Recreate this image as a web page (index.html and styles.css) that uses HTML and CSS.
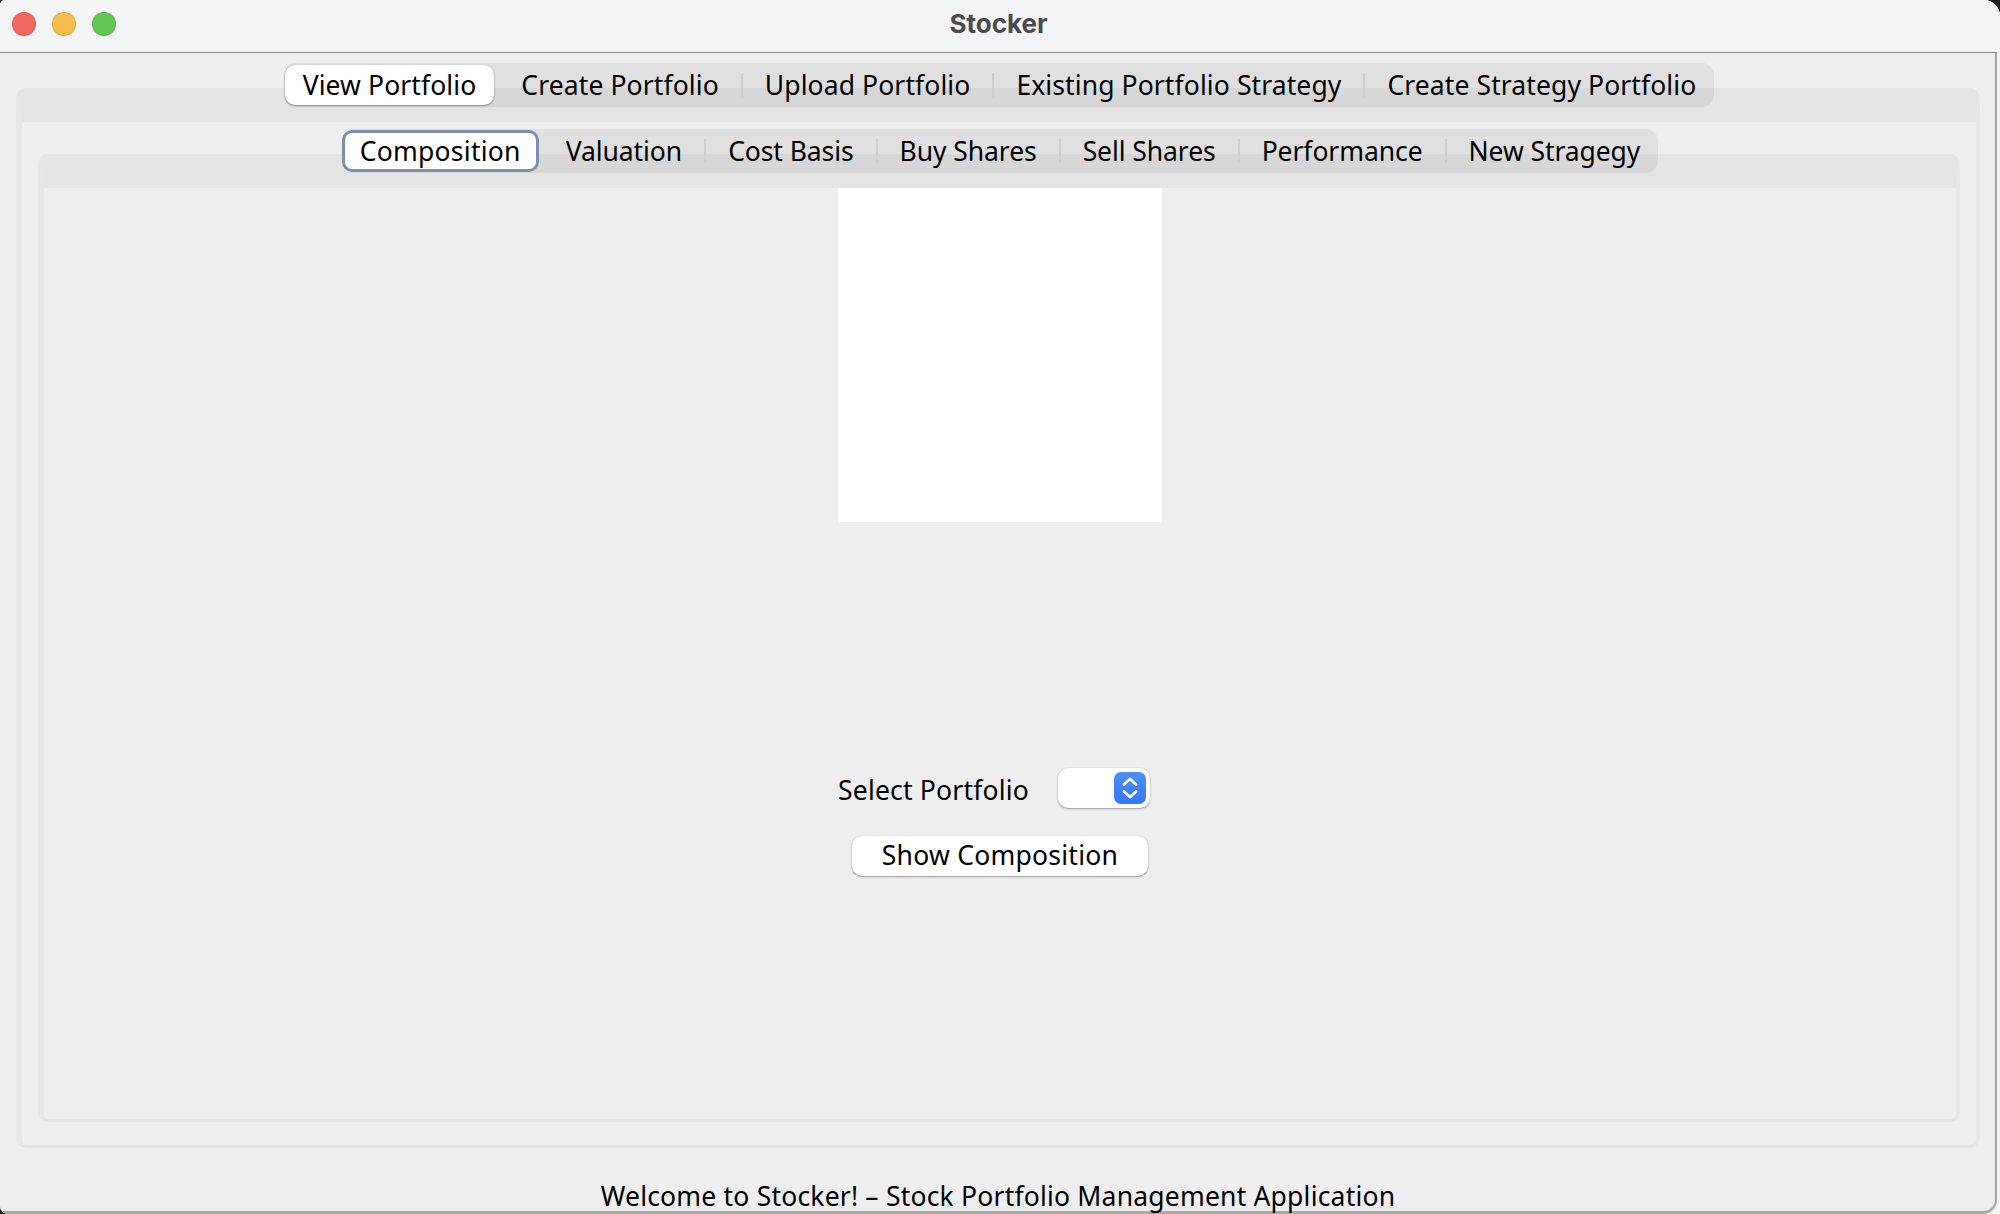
FILE: index.html
```html
<!DOCTYPE html>
<html lang="en">
<head>
<meta charset="utf-8">
<title>Stocker</title>
<link rel="stylesheet" href="styles.css">
</head>
<body>
<div class="window">
  <header class="titlebar">
    <div class="lights">
      <span class="light red"></span>
      <span class="light yellow"></span>
      <span class="light green"></span>
    </div>
    <div class="title">Stocker</div>
  </header>
  <main class="content">
    <section class="tabpane outer">
      <nav class="tabbar">
        <span class="tab selected">View Portfolio</span>
        <span class="tab">Create Portfolio</span><i class="sep"></i>
        <span class="tab">Upload Portfolio</span><i class="sep"></i>
        <span class="tab">Existing Portfolio Strategy</span><i class="sep"></i>
        <span class="tab">Create Strategy Portfolio</span>
      </nav>
      <section class="tabpane inner">
        <nav class="tabbar">
          <span class="tab selected focused">Composition</span>
          <span class="tab">Valuation</span><i class="sep"></i>
          <span class="tab">Cost Basis</span><i class="sep"></i>
          <span class="tab">Buy Shares</span><i class="sep"></i>
          <span class="tab">Sell Shares</span><i class="sep"></i>
          <span class="tab">Performance</span><i class="sep"></i>
          <span class="tab">New Stragegy</span>
        </nav>
        <div class="chart"></div>
        <div class="select-row">
          <span class="label">Select Portfolio</span>
          <div class="combo">
            <span class="stepper">
              <svg width="32" height="32" viewBox="0 0 32 32" fill="none" stroke="#fff" stroke-width="2.8" stroke-linecap="round" stroke-linejoin="round"><path d="M10 12.5 16 7l6 5.5"/><path d="M10 19.5l6 5.5 6-5.5"/></svg>
            </span>
          </div>
        </div>
        <button class="action" type="button">Show Composition</button>
      </section>
    </section>
    <footer class="status">Welcome to Stocker! &#8211; Stock Portfolio Management Application</footer>
  </main>
</div>
</body>
</html>
```
FILE: styles.css
```css
* { box-sizing: border-box; }
html, body { margin: 0; padding: 0; }
body {
  width: 2000px;
  height: 1214px;
  overflow: hidden;
  background: #1d1d1f;
  font-family: "Noto Sans", "DejaVu Sans", sans-serif;
  color: #000;
}
.window {
  width: 2000px;
  height: 1214px;
  background: #f5f5f5;
  border-radius: 5px 16px 0 8px;
  overflow: hidden;
  display: flex;
  flex-direction: column;
}
.titlebar {
  height: 53px;
  flex: none;
  background: #f3f4f6;
  display: flex;
  align-items: center;
  justify-content: center;
  padding-bottom: 7px;
  position: relative;
}
.titlebar::after {
  content: "";
  position: absolute;
  left: 0;
  right: 3px;
  bottom: 0;
  height: 1px;
  background: #8a8a8a;
}
.lights {
  position: absolute;
  left: 12px;
  top: 12px;
  display: flex;
  gap: 16px;
}
.light {
  width: 24px;
  height: 24px;
  border-radius: 50%;
  border: 1px solid rgba(0,0,0,.1);
}
.red { background: #f0685e; }
.yellow { background: #f6bd4f; }
.green { background: #62c655; }
.title {
  font-family: Inter, "Noto Sans", sans-serif;
  font-size: 26px;
  font-weight: 700;
  color: #4b4b4d;
  margin-right: 3px;
}
.content {
  flex: 1;
  min-height: 0;
  margin-right: 3px;
  display: flex;
  flex-direction: column;
  padding: 35px 15px 0 16px;
  background: #eeeeee;
  border-right: 2px solid #a4a4a4;
  border-bottom: 3px solid #a9a9a9;
  border-radius: 0 0 14px 0;
}
.tabpane {
  display: flex;
  flex-direction: column;
  border-style: solid;
  border-color: #e4e4e4 #e7e7e7 #e2e2e2 #e6e6e6;
  border-width: 34px 4px 3px 6px;
  border-radius: 10px;
  background: #eeeeee;
}
.outer {
  height: 1060px;
  flex: none;
  padding: 0 16px 23px;
}
.inner {
  flex: 1;
  min-height: 0;
  align-items: center;
}
.tabbar {
  align-self: center;
  height: 44px;
  margin-top: -59px;
  margin-bottom: 15px;
  display: flex;
  align-items: center;
  background: rgba(0,0,0,.055);
  border-radius: 12px;
}
.outer > .tabbar { margin-bottom: 47px; }
.tab {
  font-size: 26.5px;
  letter-spacing: .1px;
  line-height: 40px;
  padding: 0 22px;
  white-space: nowrap;
}
.inner .tab { letter-spacing: -.08px; }
.tab:last-child { padding-right: 18px; }
.tab.selected {
  height: 40px;
  margin: 0 5px 0 1px;
  padding: 0 18px;
  background: #fff;
  border-radius: 10px;
  box-shadow: 0 1px 2px rgba(0,0,0,.35), 0 0 1px rgba(0,0,0,.3);
}
.inner .tab.focused {
  height: 42px;
  margin-left: 0;
  line-height: 42px;
  letter-spacing: .25px;
  box-shadow: inset 0 0 0 3px #7d8ea6;
}
.sep {
  width: 2px;
  height: 24px;
  background: #cfcfcf;
  flex: none;
}
.chart {
  width: 324px;
  height: 334px;
  flex: none;
  background: #fff;
}
.select-row {
  width: 324px;
  margin-top: 246px;
  height: 40px;
  display: flex;
  align-items: center;
  justify-content: space-between;
  padding-right: 12px;
  flex: none;
}
.label {
  font-size: 26.5px;
  letter-spacing: .2px;
  line-height: 40px;
  margin-top: 4px;
}
.combo {
  width: 92px;
  height: 40px;
  background: #fff;
  border-radius: 10px;
  box-shadow: 0 1px 2px rgba(0,0,0,.35), 0 0 1px rgba(0,0,0,.2);
  display: flex;
  align-items: center;
  justify-content: flex-end;
  padding-right: 4px;
}
.stepper {
  width: 32px;
  height: 32px;
  border-radius: 7px;
  background: linear-gradient(#4f8ff7, #3478f6);
  display: block;
}
.stepper svg { display: block; }
.action {
  width: 296px;
  height: 40px;
  margin-top: 28px;
  padding: 0 0 2px;
  border: 0;
  background: #fff;
  border-radius: 10px;
  box-shadow: 0 1px 2px rgba(0,0,0,.35), 0 0 1px rgba(0,0,0,.2);
  font: inherit;
  font-size: 26.5px;
  letter-spacing: .25px;
  color: #000;
  flex: none;
}
.status {
  font-size: 26.5px;
  letter-spacing: .2px;
  line-height: 36px;
  text-align: center;
  margin-top: 30px;
  flex: none;
}
```
